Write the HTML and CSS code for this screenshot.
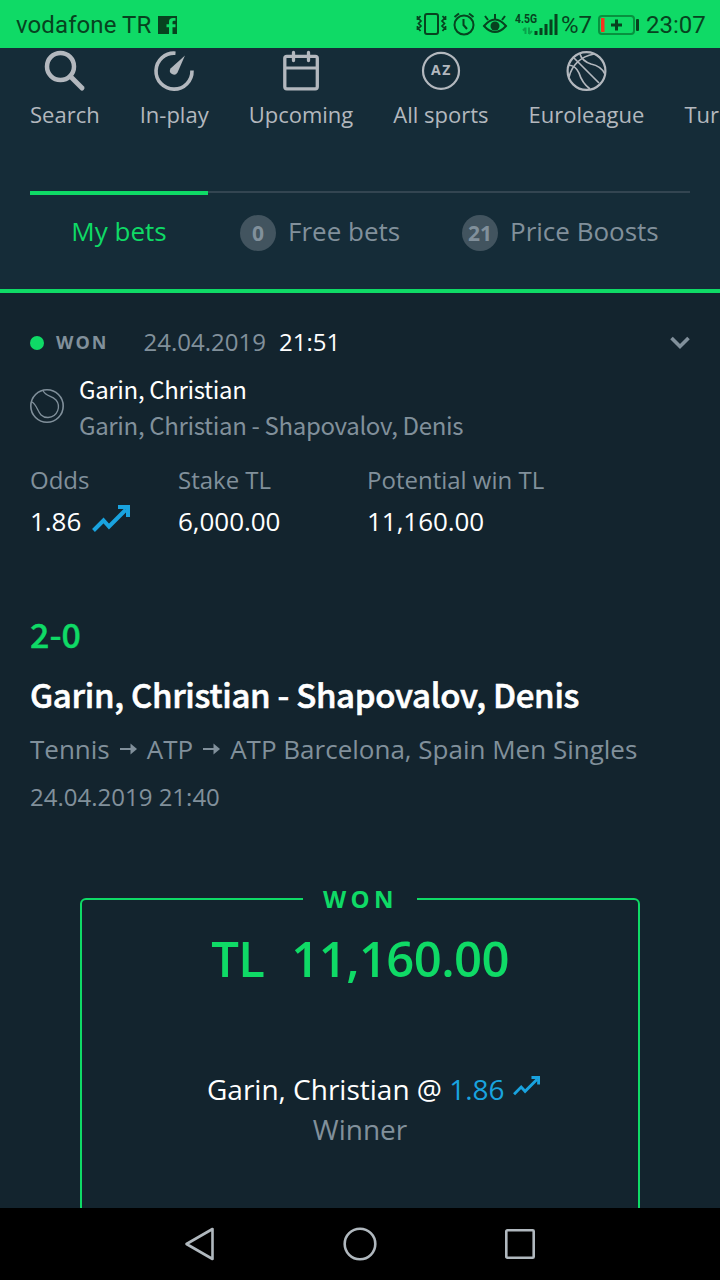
FILE: index.html
```html
<!DOCTYPE html>
<html lang="en">
<head>
<meta charset="utf-8">
<title>My bets</title>
<link rel="stylesheet" href="styles.css">
</head>
<body>
<svg class="defs" width="0" height="0">
  <symbol id="trend" viewBox="0 0 38 28"><path d="M1.5 25.5 11.5 15.5 17 21.5 34 4.500" fill="none" stroke="#19a3df" stroke-width="4"/><path d="M26 0H38V12H34V4H26Z" fill="#19a3df"/></symbol>
  <symbol id="arrow" viewBox="0 0 17 12"><path d="M0 6H12" stroke="#81909b" stroke-width="2"/><path d="M10.500 .5 17 6 10.500 11.500Z" fill="#81909b"/></symbol>
</svg>
<div class="status">
  <span class="carrier">vodafone TR</span>
  <svg class="fb" width="19" height="18" viewBox="0 0 19 18"><path fill="#07431f" fill-rule="evenodd" d="M0 0H19V18H14.500V11.300H17.500V8.300H14.500V6Q14.500 4.800 16 4.800H17.500V2H15Q11 2 11 5.700V8.300H8.500V11.300H11V18H0Z"/></svg>
  <svg class="sysicons" width="143" height="28" viewBox="0 0 143 28" fill="none" stroke="#07431f" stroke-width="2">
    <rect x="9" y="4" width="13" height="20" rx="2"/>
    <path d="M4.500 6 2.500 8.500 5 11 2.500 13.500 5 16 2.500 18.500 4.500 21M1.500 6V10M1.500 16V20M26.500 6 28.500 8.500 26 11 28.500 13.500 26 16 28.500 18.500 26.500 21M29.500 6V10M29.500 16V20" stroke-width="1.700"/>
    <circle cx="48" cy="15" r="9.500"/><path d="M47.500 9V15L51 19M38.500 7 43 3.500M53 3.500 57.500 7"/>
    <path d="M68 16Q79 3 90 16Q79 28 68 16Z"/><circle cx="79" cy="16" r="4.500" fill="#07431f" stroke="none"/><path d="M79 9V4M72 10 69 6M86 10 89 6"/>
    <path d="M109.500 17.500V24M107 20.500 109.500 18M113 24V17.500M113 24 116 21" stroke="#08a34b" stroke-width="2"/>
    <path d="M120 21V25M125 18V25M130 14V25M135 9.500V25M140 4V25" stroke-width="3"/>
    <text x="99" y="13" class="net">4.5G</text>
  </svg>
  <span class="pct">%7</span>
  <svg class="battery" width="42" height="20" viewBox="0 0 42 20"><rect x="1" y="1" width="35" height="18" rx="3" fill="none" stroke="#08913f" stroke-width="2"/><rect x="3" y="3" width="3.500" height="14" fill="#f6351e"/><path d="M13 10H24M18.500 4.500V15.500" stroke="#07431f" stroke-width="3"/><rect x="38" y="4" width="3" height="12" rx="1" fill="#07431f"/></svg>
  <span class="clock">23:07</span>
</div>
<header class="top">
  <nav class="sports">
    <a><svg width="42" height="42" viewBox="0 0 42 42"><circle cx="16.500" cy="16.500" r="13.500" fill="none" stroke="#b3b8be" stroke-width="4.500"/><path d="M26.500 26.500 38 38" stroke="#b3b8be" stroke-width="5" stroke-linecap="round"/></svg>Search</a>
    <a><svg width="42" height="42" viewBox="0 0 42 42"><path d="M22.500 3.200A18 18 0 1 0 39 20.500" fill="none" stroke="#b3b8be" stroke-width="3.600"/><path d="M32 5.500 17.500 18.500A4 4 0 1 0 24.500 22.500Z" fill="#b3b8be"/></svg>In-play</a>
    <a><svg width="42" height="42" viewBox="0 0 42 42" fill="none" stroke="#b3b8be" stroke-width="3.300"><rect x="4.800" y="6.300" width="32.500" height="32.500" rx="2"/><path d="M5 18H37" stroke-width="3"/><path d="M13.500 2.500V10.500M28.500 2.500V10.500" stroke-linecap="round"/></svg>Upcoming</a>
    <a><svg width="42" height="42" viewBox="0 0 42 42"><circle cx="21" cy="20.800" r="18" fill="none" stroke="#b3b8be" stroke-width="2.200"/><text x="21.500" y="25.200" class="az">AZ</text></svg>All sports</a>
    <a><svg width="42" height="42" viewBox="0 0 42 42" fill="none" stroke="#b3b8be" stroke-width="1.700"><circle cx="21.500" cy="21" r="18.900" stroke-width="2.200"/><path d="M9 8 34 33M4 27Q9 8 29 4M4 15Q11 16 14 23 17 33 25 39M15 4Q17 11 26 14 36 16 40 24"/></svg>Euroleague</a>
    <a><svg width="42" height="42"></svg>Turkey</a>
  </nav>
  <div class="tabs">
    <div class="tab active">My bets</div>
    <div class="tab free"><b>0</b>Free bets</div>
    <div class="tab boost"><b>21</b>Price Boosts</div>
  </div>
</header>
<main>
  <div class="betline"><i class="dot"></i><span class="state">WON</span><span class="date">24.04.2019</span><span class="time">21:51</span>
    <svg class="chev" width="20" height="14" viewBox="0 0 20 14"><path d="M1.500 2 10 10.500 18.500 2" fill="none" stroke="#81909b" stroke-width="3.600"/></svg></div>
  <div class="match">
    <svg width="34" height="34" viewBox="0 0 34 34" fill="none" stroke="#81909b" stroke-width="1.500"><circle cx="17" cy="17" r="16.200" stroke-width="1.600"/><path d="M13 1.500C16 8 21 6 26 11C31 17 28 28 18 28.500C7 28.500 9 17 2 13" stroke-width="1.300"/></svg>
    <div><div class="pick">Garin, Christian</div><div class="pair">Garin, Christian - Shapovalov, Denis</div></div>
  </div>
  <div class="figures">
    <div><label>Odds</label><p>1.86<svg width="38" height="28"><use href="#trend"/></svg></p></div>
    <div><label>Stake TL</label><p>6,000.00</p></div>
    <div><label>Potential win TL</label><p>11,160.00</p></div>
  </div>
  <div class="score">2-0</div>
  <h1>Garin, Christian - Shapovalov, Denis</h1>
  <div class="crumbs">Tennis<svg width="17" height="12"><use href="#arrow"/></svg>ATP<svg width="17" height="12"><use href="#arrow"/></svg>ATP Barcelona, Spain Men Singles</div>
  <div class="when">24.04.2019 21:40</div>
  <section class="slip">
    <span class="won">WON</span>
    <div class="sum"><span>TL</span><span>11,160.00</span></div>
    <div class="sel">Garin, Christian @ <span class="odd">1.86</span><svg width="27" height="20"><use href="#trend"/></svg></div>
    <div class="market">Winner</div>
  </section>
</main>
<footer class="sysnav">
  <svg width="32" height="36" viewBox="0 0 32 36"><path d="M2.500 18 28.500 3V33Z" /></svg>
  <svg width="34" height="34" viewBox="0 0 34 34"><circle cx="17" cy="17" r="15.300"/></svg>
  <svg width="30" height="30" viewBox="0 0 30 30"><rect x="1.300" y="1.300" width="27.400" height="27.400" rx="1"/></svg>
</footer>
</body>
</html>
```
FILE: styles.css
```css
* { box-sizing: border-box; }
body { margin: 0; width: 720px; height: 1280px; overflow: hidden; display: flex; flex-direction: column; background: #13242e; color: #fff; font-family: "Open Sans", sans-serif; white-space: nowrap; }
svg { display: block; flex: none; }
p, h1 { margin: 0; }
.defs { position: absolute; }

.status { flex: none; height: 48px; background: #0fda66; color: #07431f; display: flex; align-items: center; padding-left: 16px; font: 24px/48px Roboto, sans-serif; }
.carrier { width: 142px; letter-spacing: .1px; padding-top: 2px; }
.fb { margin: 2px 239px 0 0; }
.sysicons { margin-right: 2px; }
.net { font: bold 13px Roboto, sans-serif; fill: #07431f; stroke: none; transform: scaleX(.8); transform-origin: 99px 0; }
.pct { width: 37px; padding-top: 2px; }
.battery { margin: 2px 6px 0 0; }
.clock { padding-top: 2px; }

.top { flex: none; height: 245px; background: #152c38; border-bottom: 4px solid #0fda66; }
.sports { display: flex; gap: 40px; padding: 2px 0 0 30px; height: 143px; font-size: 22px; line-height: 30px; color: #b3b8be; }
.sports a { display: flex; flex-direction: column; align-items: center; gap: 7px; }
.az { font: bold 14px "Open Sans", sans-serif; fill: #b3b8be; letter-spacing: 1.500px; text-anchor: middle; }
.tabs { margin: 0 30px; border-top: 2px solid #334551; display: flex; font-size: 26px; line-height: 36px; color: #81909b; }
.tab { display: flex; height: 60px; margin-top: -2px; padding-top: 22px; }
.tab.active { width: 178px; border-top: 4px solid #0fda66; padding-top: 18px; justify-content: center; color: #0fda66; margin-right: 32px; }
.tab b { width: 36px; height: 36px; margin: 2px 12px 0 0; border-radius: 50%; background: #42545f; font-size: 21px; line-height: 36px; text-align: center; }
.free { width: 222px; }

main { flex: 1; min-height: 0; overflow: hidden; padding: 29px 30px 0; }
.betline { display: flex; align-items: center; height: 40px; font-size: 24px; line-height: 40px; }
.dot { width: 14px; height: 14px; border-radius: 50%; background: #0fda66; margin: 2px 12px 0 0; }
.state { width: 87.5px; margin-top: -1px; color: #81909b; font-size: 18px; font-weight: 700; letter-spacing: 2px; }
.date { width: 135.5px; color: #81909b; }
.chev { margin: 2px 0 0 auto; }
.match { display: flex; align-items: center; gap: 15px; margin-top: 9px; font: 24px/36px "Noto Sans CJK SC", sans-serif; letter-spacing: -.34px; }
.match svg { margin-top: -2px; }
.pair { color: #81909b; }
.figures { display: grid; grid-template-columns: 148px 189px 1fr; margin-top: 18px; }
.figures label { display: block; font-size: 24px; line-height: 38px; color: #81909b; }
.figures p { display: flex; align-items: center; font-size: 26px; line-height: 44px; letter-spacing: -.05px; }
.figures svg { margin: -5px 0 0 11px; }
.score { margin-top: 67px; font: 500 34px/48px "Noto Sans CJK SC", sans-serif; color: #0fda66; -webkit-text-stroke: .4px #0fda66; }
h1 { margin-top: 11px; font: 500 33px/50px "Noto Sans CJK SC", sans-serif; letter-spacing: -.29px; -webkit-text-stroke: .6px #fff; }
.crumbs { display: flex; align-items: center; margin-top: 10px; font-size: 26px; line-height: 40px; color: #81909b; }
.crumbs svg { margin: 0 10px; }
.when { margin-top: 9px; font-size: 24px; line-height: 38px; color: #81909b; }
.slip { position: relative; width: 560px; height: 380px; margin: 82px auto 0; border: 2px solid #0fda66; border-radius: 6px; padding-top: 28px; }
.won { position: absolute; left: 221px; top: -18px; width: 114px; padding-left: 20px; background: #13242e; color: #0fda66; font-size: 24px; line-height: 34px; font-weight: 700; letter-spacing: 4.300px; }
.sum { display: flex; justify-content: center; gap: 27px; color: #0fda66; font-size: 49px; line-height: 60px; font-weight: 600; letter-spacing: -.6px; }
.sel { display: flex; align-items: center; margin: 80px 0 0 125px; font-size: 28px; line-height: 42px; white-space: pre; }
.odd { color: #19a3df; }
.sel svg { margin: -6px 0 0 8px; }
.market { text-align: center; color: #81909b; font-size: 28px; line-height: 38px; }

.sysnav { flex: none; height: 72px; background: #000; display: flex; align-items: center; padding-left: 184px; }
.sysnav svg { fill: none; stroke: #b0b8be; stroke-width: 2.600; stroke-linejoin: round; }
.sysnav svg:nth-child(2) { margin: 0 128px 0 127px; }
```
